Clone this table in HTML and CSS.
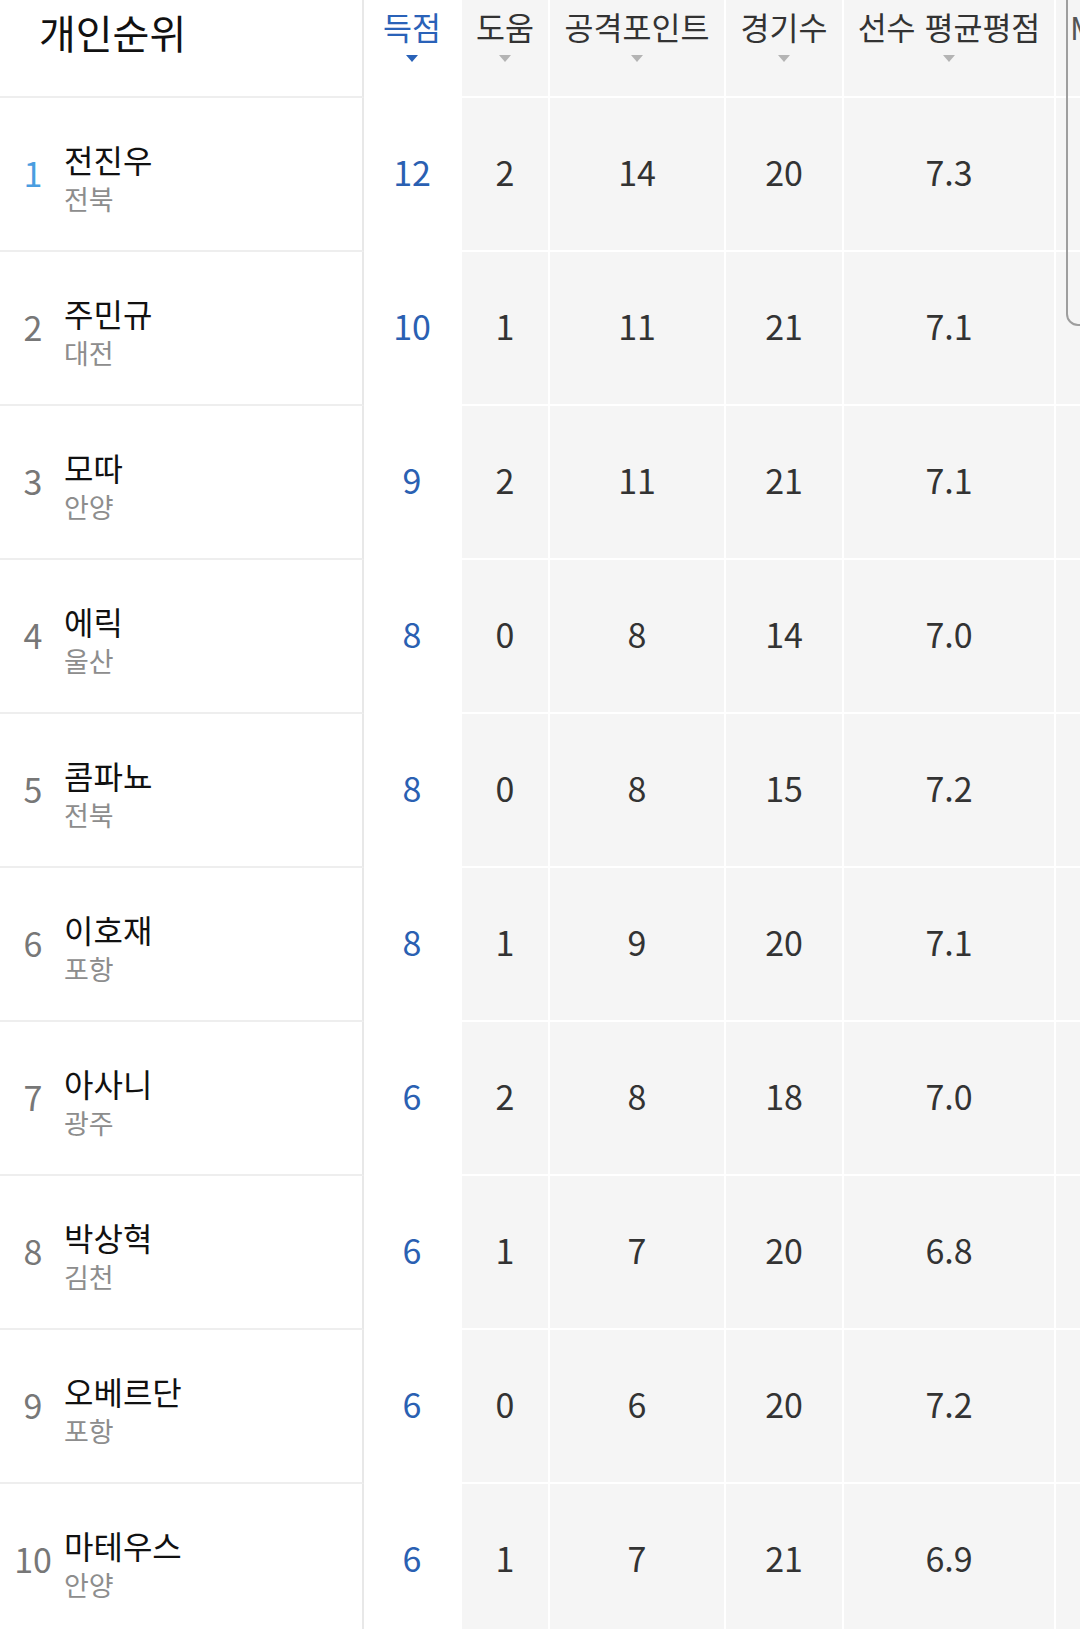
FILE: index.html
```html
<!DOCTYPE html>
<html lang="ko">
<head>
  <meta charset="UTF-8">
  <title>개인순위</title>
  <link rel="stylesheet" href="styles.css">
</head>
<body>
  <div class="ranking">
    <div class="row head">
      <div class="player title">개인순위</div>
      <div class="stat goals sorted">득점<span class="arrow"></span></div>
      <div class="stat assists">도움<span class="arrow"></span></div>
      <div class="stat points">공격포인트<span class="arrow"></span></div>
      <div class="stat games">경기수<span class="arrow"></span></div>
      <div class="stat rating">선수 평균평점<span class="arrow"></span></div>
      <div class="stat more">MOM</div>
    </div>
    <div id="rows"></div>
    <div class="scroll-box"></div>
  </div>

  <script>
    const players = [
      ["전진우", "전북", 12, 2, 14, 20, "7.3"],
      ["주민규", "대전", 10, 1, 11, 21, "7.1"],
      ["모따", "안양", 9, 2, 11, 21, "7.1"],
      ["에릭", "울산", 8, 0, 8, 14, "7.0"],
      ["콤파뇨", "전북", 8, 0, 8, 15, "7.2"],
      ["이호재", "포항", 8, 1, 9, 20, "7.1"],
      ["아사니", "광주", 6, 2, 8, 18, "7.0"],
      ["박상혁", "김천", 6, 1, 7, 20, "6.8"],
      ["오베르단", "포항", 6, 0, 6, 20, "7.2"],
      ["마테우스", "안양", 6, 1, 7, 21, "6.9"]
    ];
    const rows = document.getElementById("rows");

    players.forEach((p, i) => {
      const row = document.createElement("div");
      row.className = "row";
      row.innerHTML = `
        <div class="player">
          <span class="rank${i === 0 ? " first" : ""}">${i + 1}</span>
          <div class="who">
            <span class="name">${p[0]}</span>
            <span class="team">${p[1]}</span>
          </div>
        </div>
        <div class="stat goals">${p[2]}</div>
        <div class="stat assists">${p[3]}</div>
        <div class="stat points">${p[4]}</div>
        <div class="stat games">${p[5]}</div>
        <div class="stat rating">${p[6]}</div>
        <div class="stat more"></div>`;
      rows.appendChild(row);
    });
  </script>
</body>
</html>
```

FILE: styles.css
```css
body {
  margin: 0;
  background-color: #fff;
  font-family: "Noto Sans CJK KR", "Noto Sans", sans-serif;
  color: #222;
  overflow: hidden;
}

.ranking {
  position: relative;
  width: 1080px;
}

.row {
  display: grid;
  grid-template-columns: 364px 96px 88px 176px 118px 212px 1fr;
  height: 154px;
}
.row.head {
  height: 98px;
}

/* left player column */
.player {
  display: flex;
  align-items: center;
  border-right: 2px solid #e8e8e8;
  border-bottom: 2px solid #eeeeee;
}
.player.title {
  padding-left: 39px;
  align-items: flex-start;
  padding-top: 4px;
  font-size: 40px;
  line-height: 56px;
  color: #111;
}
.rank {
  width: 62px;
  padding-left: 2px;
  text-align: center;
  font-size: 34px;
  line-height: 40px;
  color: #777;
  padding-bottom: 2px;
}
.rank.first {
  color: #4a9de0;
}
.who {
  display: flex;
  flex-direction: column;
  padding-top: 5px;
}
.name {
  font-size: 32px;
  line-height: 40px;
  color: #111;
}
.team {
  margin-top: 4px;
  font-size: 27px;
  line-height: 32px;
  color: #8d8d8d;
}

/* stat columns */
.stat {
  display: flex;
  align-items: center;
  justify-content: center;
  background-color: #f5f5f5;
  border-left: 2px solid #fff;
  border-bottom: 2px solid #fff;
  padding-bottom: 5px;
  font-size: 34px;
  color: #333;
}
.stat.goals {
  background-color: #fff;
  border-left: none;
  color: #2a60b2;
}
.head .stat {
  flex-direction: column;
  justify-content: flex-start;
  padding-top: 5px;
  padding-bottom: 0;
  font-size: 31.5px;
  line-height: 42px;
  color: #333;
  white-space: nowrap;
}
.head .stat.goals {
  color: #2a62b8;
}
.head .stat.more {
  align-items: flex-start;
  padding-left: 14px;
  color: #555;
}
.arrow {
  width: 0;
  height: 0;
  margin-top: 8px;
  border-left: 6px solid transparent;
  border-right: 6px solid transparent;
  border-top: 7px solid #b4b4b4;
}
.sorted .arrow {
  border-top-color: #2a62b8;
}

/* half-visible panel at the right edge */
.scroll-box {
  position: absolute;
  left: 1066px;
  top: -20px;
  width: 60px;
  height: 342px;
  border: 2px solid #9e9e9e;
  border-radius: 0 0 0 12px;
}
```
